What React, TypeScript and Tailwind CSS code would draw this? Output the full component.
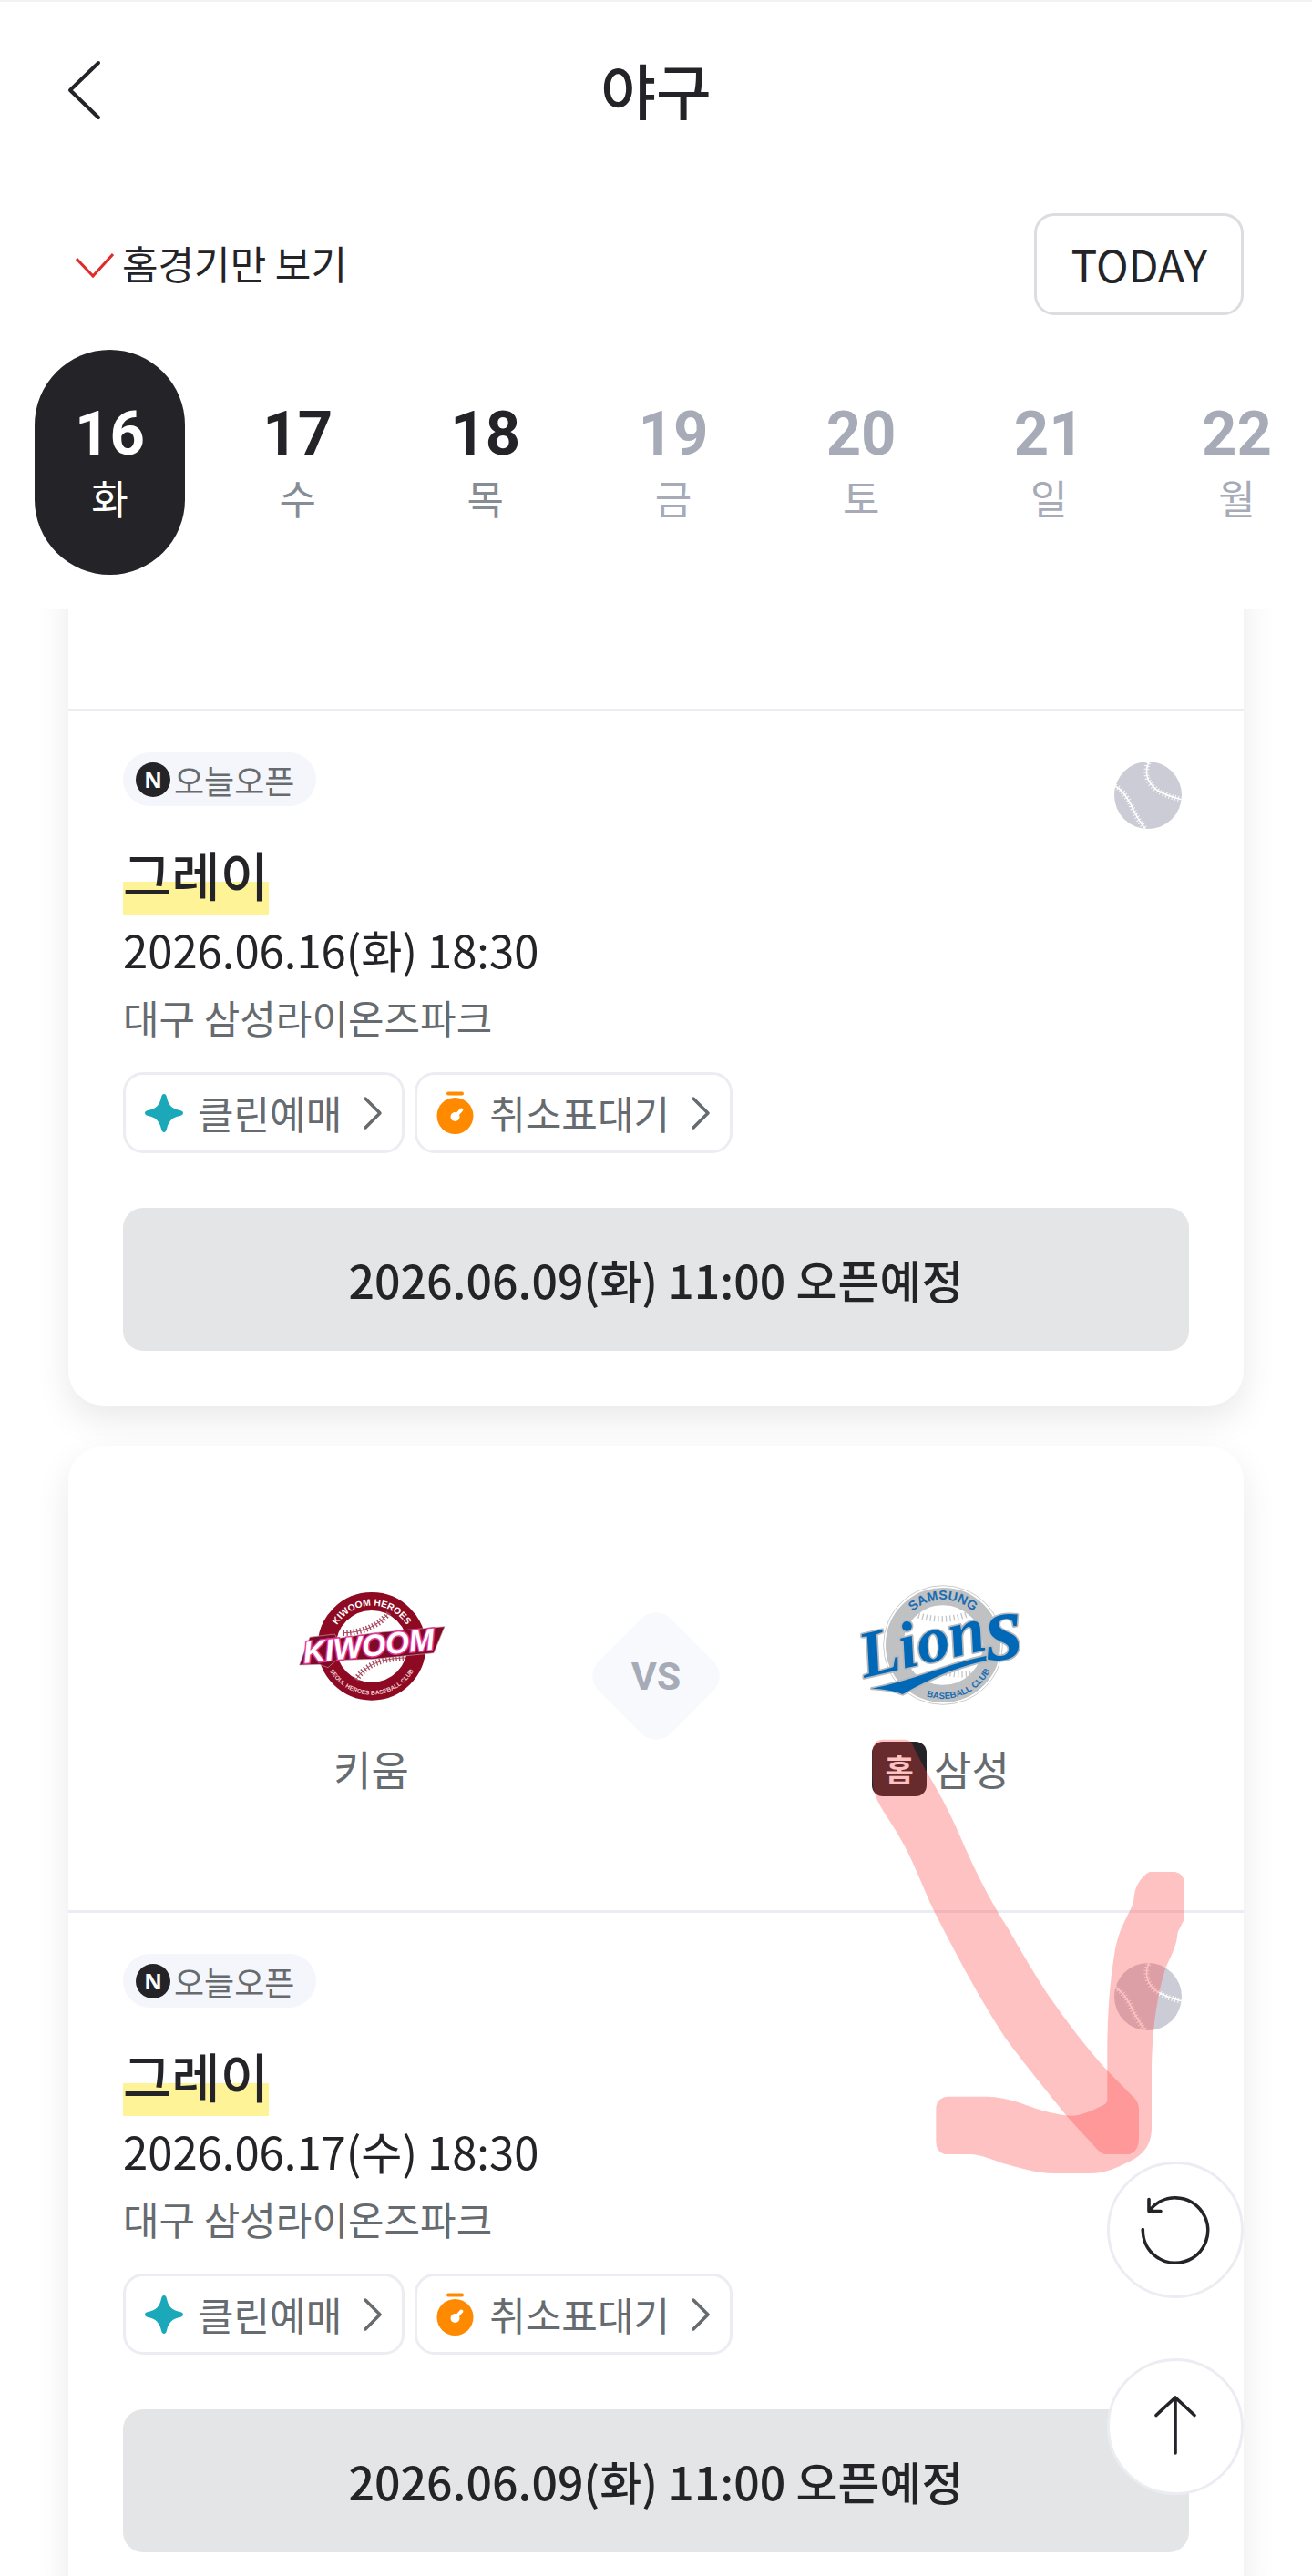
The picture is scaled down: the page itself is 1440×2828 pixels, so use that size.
import { useState } from "react";

const days = [
  { day: 16, label: "화", open: true },
  { day: 17, label: "수", open: true },
  { day: 18, label: "목", open: true },
  { day: 19, label: "금", open: false },
  { day: 20, label: "토", open: false },
  { day: 21, label: "일", open: false },
  { day: 22, label: "월", open: false },
];

function Chevron() {
  return (
    <svg className="ml-[7px] h-[38px] w-[22px]" viewBox="0 0 22 38" fill="none" stroke="#666b70" strokeWidth="3.5" strokeLinecap="round" strokeLinejoin="round">
      <path d="M3 3 19 19 3 35" />
    </svg>
  );
}

function CleanIcon() {
  return (
    <svg className="size-[42px]" viewBox="0 0 42 42" fill="#1ba9ba">
      <path d="M21 0C22.6 0 23.4 1.2 24 3.4C25.7 12 30 16.3 38.6 18C40.8 18.6 42 19.4 42 21C42 22.6 40.8 23.4 38.6 24C30 25.7 25.7 30 24 38.6C23.4 40.8 22.6 42 21 42C19.4 42 18.6 40.8 18 38.6C16.3 30 12 25.7 3.4 24C1.2 23.4 0 22.6 0 21C0 19.4 1.2 18.6 3.4 18C12 16.3 16.3 12 18 3.4C18.6 1.2 19.4 0 21 0Z" />
    </svg>
  );
}

function TimerIcon() {
  return (
    <svg className="h-[48px] w-[42px]" viewBox="0 0 42 48">
      <rect x="11" y="0.5" width="19" height="4" rx="2" fill="#ff8a00" />
      <circle cx="20.5" cy="27" r="20" fill="#ff8a00" />
      <circle cx="20.5" cy="28" r="5" fill="#fff" />
      <path d="M21 27.5 27.3 20.5" stroke="#fff" strokeWidth="4" strokeLinecap="round" />
    </svg>
  );
}

function Baseball() {
  const seams = "M47 8C41 20 42 30 52 39C60 46 70 49 83 52M9 37C18 42 22 50 26 57C31 68 35 76 43 85";
  return (
    <svg className="size-[90px] shrink-0" viewBox="0 0 90 90" fill="none" stroke="#fff">
      <clipPath id="ball">
        <circle cx="45" cy="47" r="37" />
      </clipPath>
      <g clipPath="url(#ball)">
        <rect width="90" height="90" fill="#cbccd5" stroke="none" />
        <path d={seams} strokeWidth="1.6" />
        <path d={seams} strokeWidth="6" strokeDasharray="0.9 2.6" />
      </g>
    </svg>
  );
}

function KiwoomLogo() {
  return (
    <svg className="h-[150px] w-[180px] overflow-visible" viewBox="52 36 540 450" role="img" aria-label="키움 히어로즈">
      <defs>
        <path id="kw-top" d="M188 262A134 134 0 0 1 456 262" />
        <path id="kw-bottom" d="M162 262A160 160 0 0 0 482 262" />
      </defs>
      <circle cx="322" cy="262" r="148" fill="#fff" stroke="#8d0a22" strokeWidth="60" />
      <g fill="none" stroke="#a8485f">
        <path d="M228 218C290 218 345 195 378 152M270 372C300 325 350 302 430 300" strokeWidth="3" />
        <path d="M228 218C290 218 345 195 378 152M270 372C300 325 350 302 430 300" strokeWidth="20" strokeDasharray="4 7" />
      </g>
      <g fill="#fff" fontFamily="Liberation Sans" fontWeight="700" textAnchor="middle">
        <text fontSize="31">
          <textPath href="#kw-top" startOffset="50%">KIWOOM HEROES</textPath>
        </text>
        <text fontSize="20" fill="#f0cdd4">
          <textPath href="#kw-bottom" startOffset="50%">SEOUL HEROES BASEBALL CLUB</textPath>
        </text>
      </g>
      <path d="M84 324 118 232 200 222 208 236 330 218 562 197 526 284 330 304 205 308 178 332 150 322Z" fill="#7d0a26" stroke="#c9a0ab" strokeWidth="2" />
      <text x="100" y="317" transform="rotate(-6 100 317)" fontFamily="Liberation Sans" fontSize="100" fontWeight="700" fontStyle="italic" fill="#fff" stroke="#e5399b" strokeWidth="9" paintOrder="stroke">
        KIWOOM
      </text>
    </svg>
  );
}

function LionsLogo() {
  return (
    <svg className="h-[150px] w-[180px] overflow-visible" viewBox="67 36 540 450" role="img" aria-label="삼성 라이온즈">
      <defs>
        <path id="sl-top" d="M194 258A149 149 0 0 1 492 258" />
        <path id="sl-bottom" d="M166 258A177 177 0 0 0 520 258" />
      </defs>
      <circle cx="343" cy="258" r="196" fill="#fff" stroke="#c9cbcd" strokeWidth="3" />
      <circle cx="343" cy="258" r="160" fill="#fff" stroke="#bfc1c3" strokeWidth="58" />
      <path d="M262 160Q340 185 420 158M340 345Q390 360 440 352" fill="none" stroke="#c3c5c8" strokeWidth="20" strokeDasharray="4 9" />
      <g fill="#1b6cb0" fontFamily="Liberation Sans" fontWeight="700">
        <text fontSize="43" textAnchor="middle">
          <textPath href="#sl-top" startOffset="50%">SAMSUNG</textPath>
        </text>
        <text fontSize="29">
          <textPath href="#sl-bottom" startOffset="40%">BASEBALL CLUB</textPath>
        </text>
      </g>
      <g stroke="#b5b9bd" strokeWidth="10" paintOrder="stroke" fill="#0068b7" strokeLinejoin="round" fontFamily="Liberation Serif" fontWeight="700" fontStyle="italic">
        <path d="M108 401C260 372 390 305 512 290L520 303C400 322 300 368 210 420C180 407 140 402 108 401Z" />
        <text x="84" y="366" fontSize="216" transform="rotate(-13 84 366)">Lion</text>
        <text x="492" y="310" fontSize="310" transform="rotate(-6 492 310)">s</text>
      </g>
    </svg>
  );
}

function Matchup() {
  return (
    <div className="flex items-start border-b-3 border-[#ecedf2] px-[90px] pt-36 pb-[125px]">
      <div className="flex flex-1 flex-col items-center">
        <KiwoomLogo />
        <div className="mt-[30px] h-[60px] text-[45px] leading-[60px] text-[#666b70]">키움</div>
      </div>
      <div className="relative mt-[38px] flex size-[140px] items-center justify-center">
        <svg className="absolute inset-0" viewBox="0 0 140 140" fill="#f7f9fc">
          <rect x="14" y="14" width="112" height="112" rx="23" transform="rotate(45 70 70)" />
        </svg>
        <span className="relative font-[Roboto,sans-serif] text-[43px] font-bold text-[#a6abb7]">VS</span>
      </div>
      <div className="flex flex-1 flex-col items-center">
        <LionsLogo />
        <div className="mt-[30px] flex h-[60px] items-center gap-2 text-[45px] leading-[60px] text-[#666b70]">
          <span className="flex size-[60px] items-center justify-center rounded-[12px] bg-[#242428] text-[34px] font-bold text-white">홈</span>
          삼성
        </div>
      </div>
    </div>
  );
}

function GameDetail({ date }: { date: string }) {
  return (
    <div className="px-[60px] pt-[45px] pb-[60px]">
      <div className="flex h-[59px] items-start justify-between">
        <div className="flex h-[59px] items-center rounded-full bg-[#f4f6fb] pr-6 pl-[14px] text-[36px] text-[#666b70]">
          <svg className="mr-1 size-[38px]" viewBox="0 0 38 38">
            <circle cx="19" cy="19" r="19" fill="#242428" />
            <text x="19" y="28" textAnchor="middle" fontFamily="Open Sans" fontSize="24" fontWeight="700" fill="#fff">N</text>
          </svg>
          오늘오픈
        </div>
        <Baseball />
      </div>
      <h2 className="mt-[47px] w-fit bg-linear-to-b from-transparent from-50% to-[#fff397] to-50% pb-[18px] text-[58px] leading-[54px] font-medium">그레이</h2>
      <p className="mt-1 text-[49px] leading-[68px]">{date}</p>
      <p className="mt-2 text-[43px] leading-[64px] text-[#666b70]">대구 삼성라이온즈파크</p>
      <div className="mt-[29px] flex gap-[11px]">
        <button className="flex h-[89px] items-center gap-4 rounded-[22px] border-3 border-[#ecedf3] px-[21px] text-[43px] text-[#666b70]">
          <CleanIcon />
          클린예매
          <Chevron />
        </button>
        <button className="flex h-[89px] items-center gap-4 rounded-[22px] border-3 border-[#ecedf3] px-[21px] text-[43px] text-[#666b70]">
          <TimerIcon />
          취소표대기
          <Chevron />
        </button>
      </div>
      <button className="mt-[60px] h-[157px] w-full rounded-[22px] bg-[#e4e5e7] text-[50px] font-medium">
        2026.06.09(화) 11:00 오픈예정
      </button>
    </div>
  );
}

function MarkerArrow() {
  return (
    <svg className="pointer-events-none absolute top-[292px] right-0 h-[560px] w-[425px]" viewBox="0 0 1275 1568" preserveAspectRatio="none" fill="#ff3939" fillOpacity="0.31">
      <path d="M52 130C52 95 65 83 90 83H160C180 84 184 95 190 110L228 178C295 280 325 345 360 420C410 525 455 600 500 665C555 755 590 810 640 880C705 965 750 1022 825 1100L915 1185Q930 1200 930 1220V1310Q930 1348 900 1358H820Q805 1358 780 1330L690 1238C610 1145 545 1070 490 1000C400 870 340 765 255 610C210 520 190 460 140 380C110 330 80 300 60 250C52 220 52 200 52 130Z" />
      <path d="M965 490H1050Q1080 497 1080 525V635L1058 675C1055 720 1032 755 1018 785C990 870 975 960 972 1090V1280C970 1335 940 1360 900 1380C850 1402 820 1417 770 1417H650C590 1415 540 1400 480 1385C430 1368 400 1358 375 1358H290Q262 1350 262 1320V1220Q262 1185 300 1181H430C500 1183 550 1205 590 1217C640 1230 670 1238 712 1240C750 1235 780 1222 805 1210Q826 1205 826 1190V1040C828 900 835 830 850 740C862 670 888 635 910 590C916 570 912 555 925 530Q942 500 965 490Z" />
    </svg>
  );
}

export default function App() {
  const [homeOnly, setHomeOnly] = useState(true);
  const [selected, setSelected] = useState(16);

  return (
    <div className="relative flex h-screen flex-col overflow-hidden border-t-2 border-[#f3f3f4] bg-white font-['Noto_Sans_CJK_KR',sans-serif] text-[#242428]">
      <header className="relative flex h-[194px] shrink-0 items-center justify-center">
        <button className="absolute left-[74px]" aria-label="뒤로">
          <svg className="h-[66px] w-[38px]" viewBox="0 0 38 66" fill="none" stroke="#242428" strokeWidth="4" strokeLinecap="round" strokeLinejoin="round">
            <path d="M34 3 3 33 34 63" />
          </svg>
        </button>
        <h1 className="pb-1 text-[66px] font-medium">야구</h1>
      </header>

      <div className="mt-[38px] flex h-28 shrink-0 items-center justify-between px-[75px]">
        <label className="flex items-center text-[43px]">
          <input type="checkbox" className="peer sr-only" checked={homeOnly} onChange={() => setHomeOnly(!homeOnly)} />
          <svg className="mt-1 mr-[9px] ml-2 h-[28px] w-[42px] opacity-30 peer-checked:opacity-100" viewBox="0 0 42 28" fill="none" stroke="#e02b2b" strokeWidth="3">
            <path d="M1 6 19 25 41 1" />
          </svg>
          <span className="pb-[3px]">홈경기만 보기</span>
        </label>
        <button className="h-28 rounded-[22px] border-3 border-[#dcdde0] px-[37px] pb-[2px] text-[48px]">TODAY</button>
      </div>

      <nav className="my-[38px] flex shrink-0 justify-between pl-[38px]">
        {days.map((d) => (
          <button
            key={d.day}
            onClick={() => setSelected(d.day)}
            className={`flex h-[247px] w-[165px] flex-col items-center justify-center rounded-full pt-1 ${
              d.day === selected ? "bg-[#242428] text-white" : d.open ? "text-[#242428]" : "text-[#a6abb7]"
            }`}
          >
            <span className="font-[Roboto,sans-serif] text-[67px] leading-[72px] font-bold">{d.day}</span>
            <span className={`text-[44px] leading-[68px] ${d.day !== selected && d.open ? "text-[#868c95]" : ""}`}>{d.label}</span>
          </button>
        ))}
      </nav>

      <main className="min-h-0 flex-1 overflow-hidden px-[75px]">
        <section className="-mt-15 rounded-b-[38px] bg-white shadow-[0_15px_38px_rgba(0,0,0,0.09)]">
          <div className="h-43 border-b-3 border-[#ecedf2]" />
          <GameDetail date="2026.06.16(화) 18:30" />
        </section>
        <section className="relative mt-[45px] rounded-[38px] bg-white shadow-[0_15px_38px_rgba(0,0,0,0.09)]">
          <Matchup />
          <GameDetail date="2026.06.17(수) 18:30" />
          <MarkerArrow />
        </section>
      </main>

      <div className="absolute right-[75px] bottom-[89px] flex flex-col gap-[66px]">
        <button className="size-[150px] rounded-full border-3 border-[#ecedf3] bg-white" aria-label="새로고침">
          <svg viewBox="3 3 144 144" fill="none" stroke="#242428" strokeWidth="3.6" strokeLinecap="round" strokeLinejoin="round">
            <path d="M39.3 74.5A35.7 35.7 0 1 0 46.5 54M46 41.5V54.5H59" />
          </svg>
        </button>
        <button className="size-[150px] rounded-full border-3 border-[#ecedf3] bg-white" aria-label="맨 위로">
          <svg viewBox="3 3 144 144" fill="none" stroke="#242428" strokeWidth="3.6" strokeLinecap="round" strokeLinejoin="round">
            <path d="M75 104V43M54 62.5 75 43 96 62.5" />
          </svg>
        </button>
      </div>
    </div>
  );
}
